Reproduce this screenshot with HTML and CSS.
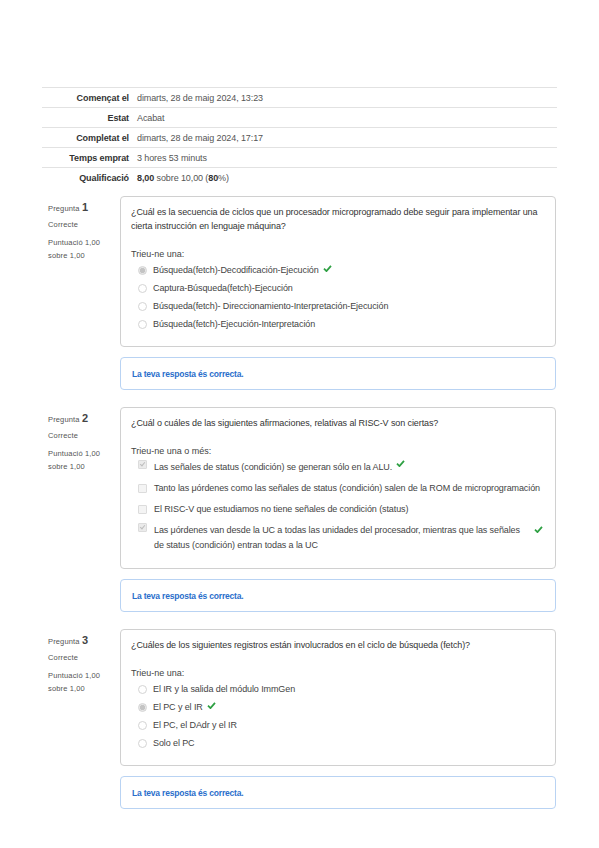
FILE: index.html
```html
<!DOCTYPE html>
<html>
<head>
    <title>Revisió de l'intent</title>
    <meta charset="utf-8">
    <link rel="stylesheet" href="styles.css">
</head>
<body>
    <div class="page">
        <table class="resum">
            <tr><th>Començat el</th><td>dimarts, 28 de maig 2024, 13:23</td></tr>
            <tr><th>Estat</th><td>Acabat</td></tr>
            <tr><th>Completat el</th><td>dimarts, 28 de maig 2024, 17:17</td></tr>
            <tr><th>Temps emprat</th><td>3 hores 53 minuts</td></tr>
            <tr><th>Qualificació</th><td><b>8,00</b> sobre 10,00 (<b>80</b>%)</td></tr>
        </table>

        <!-- Pregunta 1 -->
        <div class="que">
            <div class="info">
                <div class="no">Pregunta <span class="num">1</span></div>
                <div class="estat">Correcte</div>
                <div class="nota">Puntuació 1,00<br>sobre 1,00</div>
            </div>
            <div class="contingut">
                <div class="formulacio">
                    <div class="enunciat">¿Cuál es la secuencia de ciclos que un procesador microprogramado debe seguir para implementar una cierta instrucción en lenguaje máquina?</div>
                    <div class="prompt">Trieu-ne una:</div>
                    <div class="respostes">
                        <div class="opcio"><span class="radio marcat"></span><span class="text">Búsqueda(fetch)-Decodificación-Ejecución</span><svg class="ok" viewBox="0 0 10 8"><polyline points="1,4.2 3.8,7 9,1"/></svg></div>
                        <div class="opcio"><span class="radio"></span><span class="text">Captura-Búsqueda(fetch)-Ejecución</span></div>
                        <div class="opcio"><span class="radio"></span><span class="text">Búsqueda(fetch)- Direccionamiento-Interpretación-Ejecución</span></div>
                        <div class="opcio"><span class="radio"></span><span class="text">Búsqueda(fetch)-Ejecución-Interpretación</span></div>
                    </div>
                </div>
                <div class="feedback">La teva resposta és correcta.</div>
            </div>
        </div>

        <!-- Pregunta 2 -->
        <div class="que">
            <div class="info">
                <div class="no">Pregunta <span class="num">2</span></div>
                <div class="estat">Correcte</div>
                <div class="nota">Puntuació 1,00<br>sobre 1,00</div>
            </div>
            <div class="contingut">
                <div class="formulacio">
                    <div class="enunciat">¿Cuál o cuáles de las siguientes afirmaciones, relativas al RISC-V son ciertas?</div>
                    <div class="prompt">Trieu-ne una o més:</div>
                    <div class="respostes multi">
                        <div class="opcio"><span class="check marcat"></span><span class="text">Las señales de status (condición) se generan sólo en la ALU.</span><svg class="ok" viewBox="0 0 10 8"><polyline points="1,4.2 3.8,7 9,1"/></svg></div>
                        <div class="opcio"><span class="check"></span><span class="text">Tanto las μórdenes como las señales de status (condición) salen de la ROM de microprogramación</span></div>
                        <div class="opcio"><span class="check"></span><span class="text">El RISC-V que estudiamos no tiene señales de condición (status)</span></div>
                        <div class="opcio"><span class="check marcat"></span><span class="text llarg">Las μórdenes van desde la UC a todas las unidades del procesador, mientras que las señales de status (condición) entran todas a la UC</span><svg class="ok" viewBox="0 0 10 8"><polyline points="1,4.2 3.8,7 9,1"/></svg></div>
                    </div>
                </div>
                <div class="feedback">La teva resposta és correcta.</div>
            </div>
        </div>

        <!-- Pregunta 3 -->
        <div class="que">
            <div class="info">
                <div class="no">Pregunta <span class="num">3</span></div>
                <div class="estat">Correcte</div>
                <div class="nota">Puntuació 1,00<br>sobre 1,00</div>
            </div>
            <div class="contingut">
                <div class="formulacio">
                    <div class="enunciat">¿Cuáles de los siguientes registros están involucrados en el ciclo de búsqueda (fetch)?</div>
                    <div class="prompt">Trieu-ne una:</div>
                    <div class="respostes">
                        <div class="opcio"><span class="radio"></span><span class="text">El IR y la salida del módulo ImmGen</span></div>
                        <div class="opcio"><span class="radio marcat"></span><span class="text">El PC y el IR</span><svg class="ok" viewBox="0 0 10 8"><polyline points="1,4.2 3.8,7 9,1"/></svg></div>
                        <div class="opcio"><span class="radio"></span><span class="text">El PC, el DAdr y el IR</span></div>
                        <div class="opcio"><span class="radio"></span><span class="text">Solo el PC</span></div>
                    </div>
                </div>
                <div class="feedback">La teva resposta és correcta.</div>
            </div>
        </div>
    </div>
</body>
</html>
```

FILE: styles.css
```css
body {
    font-family: "Liberation Sans", Arial, sans-serif;
    font-size: 8.5px;
    color: #3c3c3c;
    margin: 0;
    padding: 87px 42px 20px 42px;
    background: #fff;
}

.page {
    width: 515px;
}

/* taula resum */
.resum {
    width: 100%;
    border-collapse: collapse;
    margin-bottom: 9px;
}

.resum tr {
    border-top: 1px solid #e2e2e2;
}

.resum th,
.resum td {
    height: 19px;
    padding: 0 4px;
    vertical-align: middle;
    font-size: 9px;
    letter-spacing: -0.1px;
}

.resum th {
    width: 83px;
    text-align: right;
    font-weight: bold;
    color: #333;
}

.resum td {
    color: #555;
}

.resum td b {
    color: #333;
}

/* preguntes */
.que {
    display: flex;
    margin-bottom: 17px;
}

.info {
    width: 72px;
    padding: 5px 0 0 6px;
    font-size: 7.5px;
    letter-spacing: 0.15px;
    color: #555;
}

.info .no {
    line-height: 12px;
}

.info .num {
    font-size: 11px;
    font-weight: bold;
    color: #444;
}

.info .estat {
    margin-top: 4px;
    line-height: 12px;
}

.info .nota {
    margin-top: 5px;
    line-height: 13px;
}

.contingut {
    width: 436px;
}

.formulacio {
    border: 1px solid #d0d0d0;
    border-radius: 4px;
    padding: 8px 10px 15px 10px;
}

.enunciat {
    font-size: 9px;
    line-height: 14px;
    letter-spacing: -0.1px;
    color: #333;
}

.prompt {
    margin-top: 14px;
    line-height: 14px;
    font-size: 9px;
    color: #444;
}

.respostes {
    margin-top: 2px;
    padding-left: 7px;
}

.opcio {
    display: flex;
    align-items: flex-start;
    line-height: 14px;
    font-size: 9px;
    color: #444;
    margin-bottom: 4px;
    letter-spacing: -0.1px;
}

.opcio:last-child {
    margin-bottom: 0;
}

.multi .opcio {
    margin-bottom: 7px;
}

.multi .opcio:last-child {
    margin-bottom: 0;
}

.opcio .text {
    flex: 0 1 auto;
}

.opcio .llarg {
    max-width: 368px;
    line-height: 15px;
}

.radio {
    flex: none;
    width: 7px;
    height: 7px;
    border: 1px solid #d4d4d4;
    border-radius: 50%;
    margin: 3px 6px 0 0;
    background: #fff;
}

.radio.marcat {
    background: radial-gradient(circle, #c4c4c4 0, #c4c4c4 45%, #e8e8e8 60%);
}

.check {
    flex: none;
    position: relative;
    width: 7px;
    height: 7px;
    border: 1px solid #dcdcdc;
    border-radius: 1px;
    margin: 3px 7px 0 0;
    background: #f4f4f4;
}

.check.marcat {
    margin-top: 0;
    background: #ebebeb;
}

.check.marcat::after {
    content: "";
    position: absolute;
    left: 2px;
    top: 0;
    width: 2px;
    height: 4px;
    border: solid #bdbdbd;
    border-width: 0 1.5px 1.5px 0;
    transform: rotate(40deg);
}

.ok {
    flex: none;
    width: 9px;
    height: 7px;
    margin: 2px 0 0 4px;
}

.multi .ok {
    margin-top: 0;
}

.llarg + .ok {
    margin: 3px 0 0 12px;
}

.ok polyline {
    fill: none;
    stroke: #2ea043;
    stroke-width: 2;
}

.feedback {
    margin-top: 10px;
    border: 1px solid #b9d3f3;
    border-radius: 4px;
    padding: 10px 11px 9px 11px;
    line-height: 12px;
    font-weight: bold;
    color: #2a6ecb;
    letter-spacing: -0.2px;
}
```
